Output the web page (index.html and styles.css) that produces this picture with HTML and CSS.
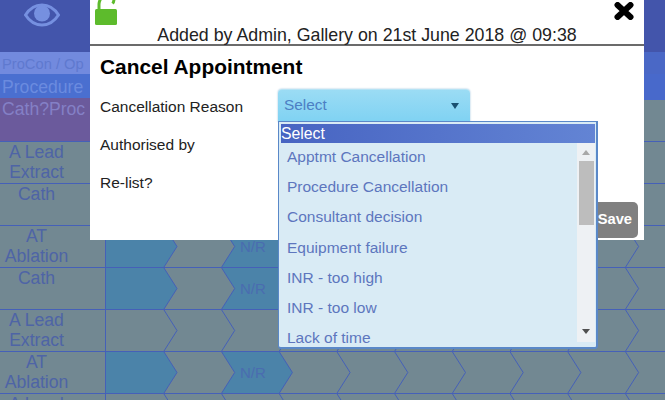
FILE: index.html
```html
<!DOCTYPE html>
<html lang="en">
<head>
<meta charset="utf-8">
<title>Cancel Appointment</title>
<link rel="stylesheet" href="styles.css">
</head>
<body>
<svg class="defs" width="0" height="0" aria-hidden="true">
  <defs>
    <g id="chevrons" class="chev">
      <path d="M58 0l13 20.500-13 20.500M115.700 0l13 20.500-13 20.500M173.400 0l13 20.500-13 20.500M231.100 0l13 20.500-13 20.500M288.800 0l13 20.500-13 20.500M346.500 0l13 20.500-13 20.500M404.200 0l13 20.500-13 20.500M461.900 0l13 20.500-13 20.500M519.600 0l13 20.500-13 20.500"/>
    </g>
    <g id="filled" class="fill">
      <path d="M0 0H58L71 20.500 58 41H0Z"/>
      <path d="M115.700 0H173.400L186.400 20.500 173.400 41H115.700L128.700 20.500Z"/>
    </g>
  </defs>
</svg>

<header class="topbar">
  <svg class="eye" width="36" height="24" viewBox="0 0 36 24">
    <path class="eye-line" d="M1.500 12C6 5 11.500 2 18 2S30 5 34.500 12C30 19 24.500 22 18 22S6 19 1.500 12Z"/>
    <circle class="eye-iris" cx="18" cy="10.500" r="8"/>
  </svg>
</header>

<section class="bands">
  <div class="band-left">
    <div class="cell-procon">ProCon / Op</div>
    <div class="cell-procedure">Procedure</div>
    <div class="cell-cath">Cath?Proc</div>
  </div>
  <div class="band-right">
    <div class="right-a"></div>
    <div class="right-b">De</div>
    <div class="right-c"></div>
  </div>
</section>

<main class="rows">
  <div class="row"><div class="label">A Lead Extract</div><svg class="track"><use href="#chevrons"/></svg></div>
  <div class="row"><div class="label">Cath</div><svg class="track"><use href="#chevrons"/></svg></div>
  <div class="row"><div class="label">AT Ablation</div><svg class="track"><use href="#filled"/><use href="#chevrons"/><text class="nr" x="134" y="26">N/R</text></svg></div>
  <div class="row"><div class="label">Cath</div><svg class="track"><use href="#filled"/><use href="#chevrons"/><text class="nr" x="134" y="26">N/R</text></svg></div>
  <div class="row"><div class="label">A Lead Extract</div><svg class="track"><use href="#chevrons"/></svg></div>
  <div class="row"><div class="label">AT Ablation</div><svg class="track"><use href="#filled"/><use href="#chevrons"/><text class="nr" x="134" y="26">N/R</text></svg></div>
  <div class="row"><div class="label">A Lead Extract</div><svg class="track"><use href="#chevrons"/></svg></div>
</main>

<div class="modal">
  <div class="modal-head">
    <svg class="lock" width="24" height="26" viewBox="0 0 24 26">
      <path class="lock-arm" d="M5 10V4C5 2 5.500 1 6.500 -1M18.500 3.500C19.500 2.500 20 1 20 -1"/>
      <rect class="lock-body" x="1" y="9" width="22" height="16" rx="1.500"/>
    </svg>
    <div class="added">Added by Admin, Gallery on 21st June 2018 @ 09:38</div>
    <svg class="close" width="20" height="18" viewBox="0 0 20 18">
      <path class="close-x" d="M3.500 3L16.500 15M16.500 3L3.500 15"/>
    </svg>
  </div>
  <h1 class="title">Cancel Appointment</h1>
  <div class="form">
    <div class="form-label">Cancellation Reason</div>
    <div class="select"><span>Select</span><i class="caret"></i></div>
    <div class="form-label">Authorised by</div>
    <div class="blank"></div>
    <div class="form-label">Re-list?</div>
    <div class="relist"></div>
  </div>
  <div class="modal-foot"><button class="save">Save</button></div>

  <div class="menu">
    <div class="menu-head">Select</div>
    <div class="menu-body">
      <ul class="options">
        <li>Apptmt Cancellation</li>
        <li>Procedure Cancellation</li>
        <li>Consultant decision</li>
        <li>Equipment failure</li>
        <li>INR - too high</li>
        <li>INR - too low</li>
        <li>Lack of time</li>
      </ul>
      <div class="scroll">
        <i class="arrow-up"></i>
        <div class="thumb"></div>
        <i class="arrow-down"></i>
      </div>
    </div>
  </div>
</div>
</body>
</html>
```

FILE: styles.css
```css
* { box-sizing: border-box; }
html, body { margin: 0; padding: 0; }
html { overflow: hidden; }
body {
  width: 665px;
  height: 400px;
  overflow: hidden;
  position: relative;
  background: #728892;
  font-family: "Liberation Sans", Arial, sans-serif;
}
.defs { position: absolute; }

.topbar {
  height: 52px;
  background: #4355ab;
  padding: 3px 0 0 24px;
}
.eye { display: block; }
.eye-line { fill: none; stroke: #7690e0; stroke-width: 3; }
.eye-iris { fill: #7690e0; }

.bands { display: flex; height: 90px; }
.band-left { width: 105px; display: flex; flex-direction: column; }
.band-right { flex: 1; display: flex; flex-direction: column; }
.cell-procon {
  height: 22px;
  background: #728ade;
  color: #5f79cf;
  font-size: 14.700px;
  line-height: 24px;
  padding-left: 2px;
  white-space: nowrap;
}
.cell-procedure {
  height: 24px;
  background: #4a6fd0;
  color: #6b8bdf;
  font-size: 17.600px;
  line-height: 26px;
  padding-left: 2px;
}
.cell-cath {
  flex: 1;
  background: #6b5a9c;
  color: #8480c6;
  font-size: 17.600px;
  line-height: 22px;
  padding-left: 2px;
  border-bottom: 1px solid #4560b8;
}
.right-a { height: 22px; background: #4a68c6; }
.right-b {
  height: 26px;
  background: #4869cb;
  color: #6583dc;
  font-size: 14px;
  line-height: 26px;
  padding-left: 4px;
  overflow: hidden;
}
.right-c { flex: 1; background: #728892; border-bottom: 1px solid #4560b8; }

.rows { height: 258px; overflow: hidden; }
.row {
  display: flex;
  height: 42px;
  border-bottom: 1px solid #4560b8;
  overflow: hidden;
}
.label {
  flex: none;
  width: 106px;
  padding: 0 33px 0 1px;
  border-right: 1px solid #4560b8;
  text-align: center;
  font-size: 17.600px;
  line-height: 20px;
  color: #4e64a6;
}
.track { width: 559px; height: 41px; display: block; flex: none; }
.chev path { fill: none; stroke: #4560b8; stroke-width: 1; }
.fill path { fill: #4b83a9; }
.nr { font-size: 15px; fill: #4a6cb0; font-family: "Liberation Sans", Arial, sans-serif; }

.modal {
  position: absolute;
  left: 90px;
  top: 0;
  width: 554px;
  height: 240px;
  background: #fff;
  display: flex;
  flex-direction: column;
}
.modal-head {
  height: 46px;
  display: grid;
  grid-template-columns: 1fr auto 1fr;
  border-bottom: 2px solid #6b6b6b;
}
.lock { display: block; margin-left: 4px; overflow: hidden; }
.lock-arm { fill: none; stroke: #5dbb2c; stroke-width: 3; }
.lock-body { fill: #5dbb2c; }
.added {
  font-size: 17.800px;
  line-height: 20px;
  padding-top: 25px;
  color: #222;
  white-space: nowrap;
}
.close { justify-self: end; margin: 2px 10px 0 0; display: block; }
.close-x { fill: none; stroke: #000; stroke-width: 6; stroke-linecap: round; }

.title {
  margin: 9px 0 0 10px;
  font-size: 20.900px;
  line-height: 24px;
  font-weight: bold;
  color: #000;
}
.form {
  margin: 9px 0 0 10px;
  display: grid;
  grid-template-columns: 178px 192px;
  grid-auto-rows: 38px;
  align-items: center;
  font-size: 15.500px;
  color: #222;
}
.select {
  height: 33px;
  margin-top: -4px;
  border-radius: 4px 4px 0 0;
  background: linear-gradient(#9bdcf4, #7fd2f3);
  border-top: 1px solid #b5e3f5;
  box-shadow: 0 0 2px #8fb9d8;
  display: flex;
  align-items: center;
  justify-content: space-between;
  padding: 0 11px 2px 6px;
  color: #4c7fc4;
  font-size: 15.400px;
}
.caret {
  width: 0;
  height: 0;
  margin-top: 2px;
  border-left: 4px solid transparent;
  border-right: 4px solid transparent;
  border-top: 6px solid #1a5070;
}
.relist { height: 24px; border-left: 1px solid #666; }

.modal-foot {
  margin-top: auto;
  padding: 0 6px 4px 0;
  display: flex;
  justify-content: flex-end;
}
.save {
  width: 80px;
  height: 36px;
  border: 0;
  border-radius: 5px;
  background: #808080;
  color: #fff;
  font: bold 14.700px "Liberation Sans", Arial, sans-serif;
  text-align: right;
  padding: 0 6px 2px 0;
}

.menu {
  position: absolute;
  left: 188px;
  top: 121px;
  width: 320px;
  height: 228px;
  border: 1px solid #5a88c8;
  border-bottom-width: 2px;
  border-right-width: 2px;
  border-radius: 0 0 3px 3px;
  padding: 2px 1px 0 2px;
  background: #d9ebf5;
  display: flex;
  flex-direction: column;
}
.menu-head {
  height: 19px;
  flex: none;
  background: linear-gradient(90deg, #4764c2, #6384d4);
  color: #fff;
  font-size: 15.800px;
  line-height: 20px;
}
.menu-body { flex: 1; display: flex; min-height: 0; }
.options {
  list-style: none;
  margin: -1px 0 0;
  padding: 0 0 0 6px;
  flex: 1;
  overflow: hidden;
  color: #5d76be;
  font-size: 15.500px;
}
.options li { height: 30.200px; line-height: 30.200px; white-space: nowrap; }
.scroll {
  width: 18px;
  flex: none;
  height: 199px;
  background: #eef1f4;
  display: flex;
  flex-direction: column;
  align-items: center;
  padding: 7px 0 8px;
}
.thumb { width: 15px; height: 64px; margin-top: 6px; background: #bdbdbd; }
.arrow-up, .arrow-down { width: 0; height: 0; border-left: 4px solid transparent; border-right: 4px solid transparent; }
.arrow-up { border-bottom: 5px solid #a8a8a8; }
.arrow-down { margin-top: auto; border-top: 5px solid #505050; }
```
